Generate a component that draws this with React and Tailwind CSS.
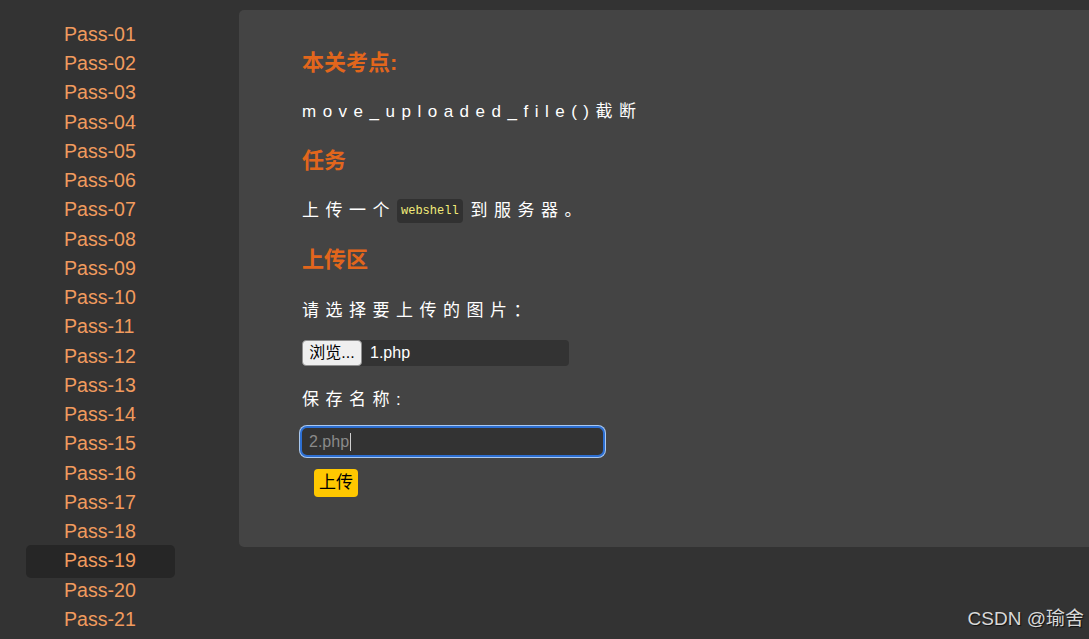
import React from 'react';

const passes = Array.from({ length: 21 }, (_, i) => `Pass-${String(i + 1).padStart(2, '0')}`);

const Sidebar = () => (
  <div className="w-[239px] shrink-0 pt-[20px]">
    {passes.map((p) => {
      const active = p === 'Pass-19';
      return (
        <div
          key={p}
          className={
            active
              ? 'ml-[26px] w-[149px] h-[33px] -my-[1.875px] pl-[38px] flex items-center rounded-[5px] bg-[#262626]'
              : 'ml-[26px] w-[149px] h-[29.25px] pl-[38px] flex items-center'
          }
        >
          <span className="text-[19.6px] leading-none text-[#f19b5e]">{p}</span>
        </div>
      );
    })}
  </div>
);

const Heading = ({ children, className = '' }) => (
  <h3 className={`h-[30px] flex items-center text-[22px] font-bold text-[#e2661c] ${className}`}>{children}</h3>
);

const Text = ({ children, className = '' }) => (
  <p className={`h-[30px] flex items-center text-[17px] tracking-[6.5px] text-white ${className}`}>{children}</p>
);

export default function App() {
  return (
    <div
      className="relative w-full h-[639px] bg-[#333333] flex overflow-hidden"
      style={{ fontFamily: '"Liberation Sans", "Noto Sans CJK SC", sans-serif' }}
    >
      <Sidebar />

      {/* main panel */}
      <div className="flex-1 mt-[10px] h-[537px] -mr-[10px] rounded-[5px] bg-[#444444] pl-[63px] pt-[37px]">
        <Heading>本关考点:</Heading>
        <Text className="mt-[20px]">move_uploaded_file()截断</Text>
        <Heading className="mt-[18px]">任务</Heading>
        <Text className="mt-[21px]">
          上传一个
          <code
            className="ml-[1px] mr-[8px] px-[4px] h-[24px] inline-flex items-center rounded-[4px] bg-[#313131] text-[12px] tracking-normal text-[#f3ec7a]"
            style={{ fontFamily: '"Liberation Mono", monospace' }}
          >
            webshell
          </code>
          到服务器。
        </Text>
        <Heading className="mt-[18px]">上传区</Heading>
        <Text className="mt-[22px]">请选择要上传的图片：</Text>

        <div className="mt-[14px] w-[267px] h-[26px] flex items-center rounded-[4px] bg-[#333333]">
          <button className="h-[26px] w-[60px] rounded-[4px] border border-[#8f8f8f] bg-[#efefef] text-[16px] text-black flex items-center justify-center">
            浏览...
          </button>
          <span className="ml-[8px] text-[16px] text-white">1.php</span>
        </div>

        <Text className="mt-[19px]">保存名称:</Text>

        <div className="mt-[11px] -ml-[2px] w-[305px] h-[31px] rounded-[7px] border-2 border-[#2d6fd2] ring-1 ring-[#a9c8f0] bg-[#333333] flex items-center pl-[7px]">
          <span className="text-[16px] text-[#8a8a8a]">2.php</span>
          <span className="ml-[1px] w-[1px] h-[18px] bg-[#cfcfcf]" />
        </div>

        <button className="mt-[12px] ml-[12px] w-[44px] h-[28px] rounded-[4px] bg-[#ffc800] text-[17px] text-black flex items-center justify-center">
          上传
        </button>
      </div>

      {/* watermark */}
      <div
        className="absolute right-[5px] bottom-[6px] text-[19px] text-[#d8d8d8]"
        style={{ textShadow: '1px 1px 1px #111' }}
      >
        CSDN @瑜舍
      </div>
    </div>
  );
}
